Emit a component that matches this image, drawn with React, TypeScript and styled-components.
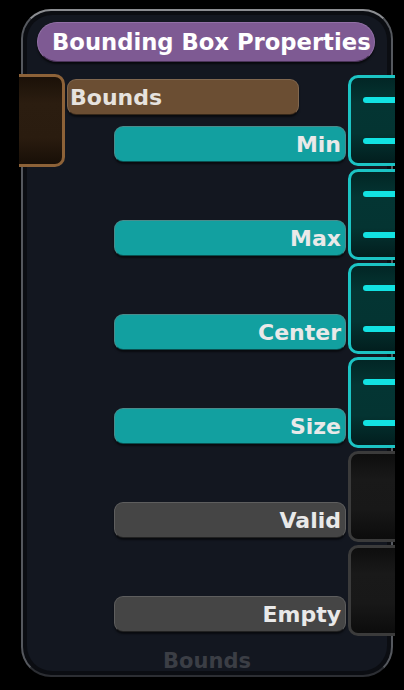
import styled, { createGlobalStyle } from 'styled-components';

type Tone = 'teal' | 'gray';

type OutputItem = {
	label: string;
	tone: Tone;
};

const outputs: OutputItem[] = [
	{ label: 'Min', tone: 'teal' },
	{ label: 'Max', tone: 'teal' },
	{ label: 'Center', tone: 'teal' },
	{ label: 'Size', tone: 'teal' },
	{ label: 'Valid', tone: 'gray' },
	{ label: 'Empty', tone: 'gray' },
];

const GlobalStyle = createGlobalStyle`
	html, body {
		margin: 0;
		padding: 0;
		background: #000;
	}

	body {
		font-family: 'DejaVu Sans', 'Open Sans', sans-serif;
	}
`;

const Viewport = styled.div`
	width: 376px;
	height: 690px;
	margin-left: 19px;
	overflow: hidden;
`;

const Card = styled.div`
	box-sizing: border-box;
	width: 372px;
	height: 668px;
	margin: 9px 0 0 2px;

	border: 2px solid #55585e;
	border-top-color: #8b8d91;
	border-bottom-color: #2c2e33;
	border-radius: 30px;
	background: #0b0d12;
	padding: 4px;
`;

const Panel = styled.div`
	display: flex;
	flex-direction: column;
	height: 100%;

	background: #131720;
	border-radius: 25px;
`;

const Title = styled.div`
	display: flex;
	align-items: center;
	box-sizing: border-box;

	height: 40px;
	margin: 7px 12px 0 10px;
	padding-left: 14px;

	background: #7e5a93;
	border: 1px solid #9270a6;
	border-bottom-color: #4a3358;
	border-radius: 20px;
	box-shadow: 0 2px 2px rgba(0, 0, 0, 0.6);

	color: #fff;
	font-size: 22.7px;
	font-weight: 700;
	white-space: nowrap;
`;

const Body = styled.div`
	margin: 12px -8px 0;
`;

const Row = styled.div`
	display: grid;
	grid-template-columns: 46px 1fr 47px;
	height: 94px;
`;

const InputSocket = styled.div`
	box-sizing: border-box;
	height: 93px;
	margin-left: -12px;

	border: 3px solid #8d6238;
	border-radius: 10px;
	background: linear-gradient(180deg, #1b1108 0%, #2b1d10 30%, #2a1c0f 70%, #180f07 100%);
`;

const BarColumn = styled.div`
	display: flex;
	flex-direction: column;
	align-items: flex-end;
	padding: 5px 2px 6px 0;
`;

const Bar = styled.div<{ $tone: Tone | 'brown' }>`
	display: flex;
	align-items: center;
	box-sizing: border-box;

	width: 232px;
	height: 36px;
	padding: 0 5px;

	background: ${(p) => (p.$tone === 'teal' ? '#12a0a0' : p.$tone === 'gray' ? '#454545' : '#6b4e33')};
	border: 1px solid ${(p) => (p.$tone === 'teal' ? '#4a8c8c' : p.$tone === 'gray' ? '#5e5e5e' : '#80674f')};
	border-bottom-color: rgba(0, 0, 0, 0.5);
	border-radius: 9px;
	box-shadow: 0 2px 2px rgba(0, 0, 0, 0.55);

	color: #e9e9e9;
	font-size: 22px;
	font-weight: 700;
`;

const InputBar = styled(Bar)`
	align-self: flex-start;
	margin-left: 2px;
	padding-left: 2px;
	color: #e6e2de;
`;

const OutputBar = styled(Bar)`
	justify-content: flex-end;
	margin-top: auto;
	padding-right: 4px;
`;

const OutputSocket = styled.div<{ $tone: Tone }>`
	position: relative;
	box-sizing: border-box;
	width: 60px;
	height: 91px;
	margin-top: 1px;

	border: 3px solid ${(p) => (p.$tone === 'teal' ? '#1cc4c4' : '#3b3b3b')};
	border-radius: 10px;
	background: ${(p) =>
		p.$tone === 'teal'
			? 'linear-gradient(180deg, #022625 0%, #043533 30%, #043432 65%, #021e1e 100%)'
			: 'linear-gradient(180deg, #0e0e0e 0%, #191919 30%, #181818 65%, #0c0c0c 100%)'};
`;

const Wire = styled.span<{ $top: number }>`
	position: absolute;
	top: ${(p) => p.$top}px;
	left: 12px;
	width: 50px;
	height: 6px;

	background: #12e2e2;
	border-radius: 3px;
`;

const Footer = styled.div`
	margin-top: auto;
	margin-bottom: -2px;

	color: #3b3e45;
	font-size: 21px;
	font-weight: 700;
	text-align: center;
`;

const App = () => {
	return (
		<>
			<GlobalStyle />
			<Viewport>
				<Card>
					<Panel>
						<Title>Bounding Box Properties</Title>
						<Body>
							{outputs.map((item, index) => (
								<Row key={item.label}>
									{index === 0 ? <InputSocket /> : <div />}
									<BarColumn>
										{index === 0 && <InputBar $tone='brown'>Bounds</InputBar>}
										<OutputBar $tone={item.tone}>{item.label}</OutputBar>
									</BarColumn>
									<OutputSocket $tone={item.tone}>
										{item.tone === 'teal' && (
											<>
												<Wire $top={19} />
												<Wire $top={60} />
											</>
										)}
									</OutputSocket>
								</Row>
							))}
						</Body>
						<Footer>Bounds</Footer>
					</Panel>
				</Card>
			</Viewport>
		</>
	);
};

export default App;
